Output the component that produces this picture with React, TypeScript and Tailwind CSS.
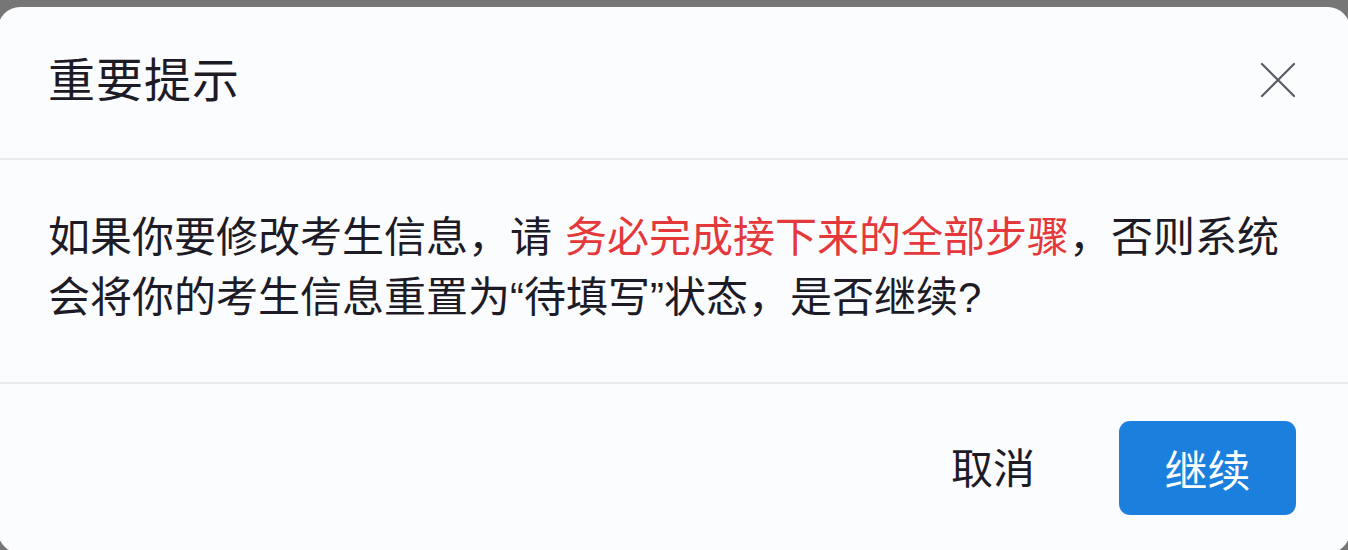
import React from "react";

export default function App() {
  const font = { fontFamily: '"Noto Sans CJK SC", "Noto Sans", sans-serif' };
  const latin = { fontFamily: '"Liberation Sans", "Noto Sans", sans-serif' };
  return (
    <div className="h-[550px] w-[1348px] overflow-hidden bg-[#767676] pt-[7px]" style={font}>
      <div className="-mx-[2px] flex h-[546px] flex-col rounded-[22px] bg-[#fbfcfe] text-[#1d1b26]">
        <div className="flex h-[151px] items-center justify-between pb-[6px] pl-[50px] pr-[54px]">
          <div className="-mt-[6px] text-[47px] leading-none tracking-[1px]">重要提示</div>
          <svg width="36" height="36" viewBox="0 0 36 36" className="text-[#5c5a66]">
            <path d="M2 2 L34 34 M34 2 L2 34" stroke="currentColor" strokeWidth="2.2" strokeLinecap="round" />
          </svg>
        </div>
        <div className="h-[2px] bg-[#e9ebef]" />
        <div className="flex h-[222px] flex-col justify-center pb-[10px] pl-[50px] text-[42px] leading-[60px]">
          <div className="whitespace-nowrap">
            如果你要修改考生信息，请<span className="inline-block w-[13px]" />
            <span className="text-[#e5383b]">务必完成接下来的全部步骤</span>，否则系统
          </div>
          <div className="whitespace-nowrap">
            会将你的考生信息重置为<span style={latin}>“</span>待填写<span style={latin}>”</span>状态，是否继续<span style={latin}>?</span>
          </div>
        </div>
        <div className="h-[2px] bg-[#e9ebef]" />
        <div className="flex flex-1 items-start justify-end pr-[54px] pt-[37px]">
          <button className="mr-[84px] mt-[22px] text-[42px] leading-[46px] text-[#1d1b26]">取消</button>
          <button className="flex h-[94px] w-[177px] items-center justify-center rounded-[11px] bg-[#1b7fde] text-[43px] text-white">
            继续
          </button>
        </div>
      </div>
    </div>
  );
}
